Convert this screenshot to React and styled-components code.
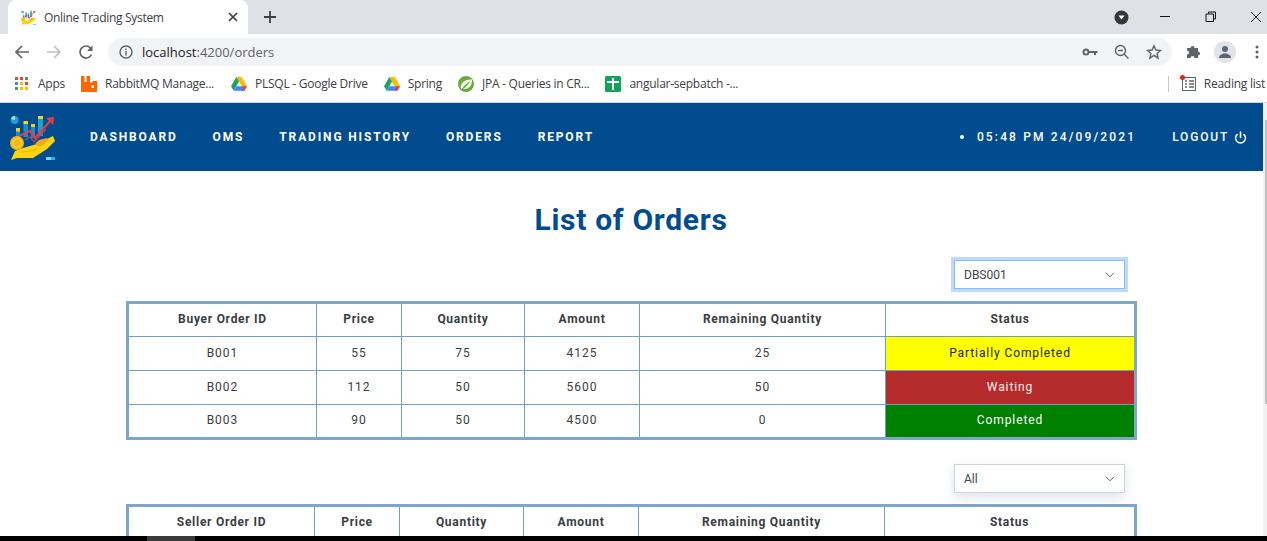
import React from "react";
import styled, { createGlobalStyle } from "styled-components";
import { ChevronDown, Power } from "lucide-react";

const GlobalStyle = createGlobalStyle`
  html, body {
    margin: 0;
    padding: 0;
    height: 100%;
    overflow: hidden;
    background: #ffffff;
  }
  * { box-sizing: border-box; }
`;

const Root = styled.div`
  width: 1267px;
  height: 541px;
  display: flex;
  flex-direction: column;
  overflow: hidden;
  font-family: Roboto, sans-serif;
`;

/* browser chrome */
const TabStrip = styled.div`
  height: 34px;
  flex-shrink: 0;
  display: flex;
  align-items: center;
  background: #dee1e6;
  padding-left: 8px;
`;
const Tab = styled.div`
  width: 240px;
  height: 34px;
  display: flex;
  align-items: center;
  background: #ffffff;
  border-radius: 8px 8px 0 0;
  padding: 0 7px 0 13px;
  gap: 8px;
`;
const TabTitle = styled.span`
  flex: 1;
  font-family: "Open Sans", sans-serif;
  font-size: 12px;
  letter-spacing: -0.3px;
  color: #3c4043;
  white-space: nowrap;
`;
const StripIcon = styled.button`
  border: 0;
  padding: 0;
  background: none;
  display: flex;
  align-items: center;
  justify-content: center;
  width: ${(p) => p.$w || 16}px;
  height: 16px;
  margin-left: ${(p) => p.$ml || 0}px;
`;
const StripSpacer = styled.div`
  flex: 1;
`;
const StripControls = styled.div`
  height: 34px;
  display: flex;
  align-items: center;
`;
const Toolbar = styled.div`
  height: 32px;
  flex-shrink: 0;
  display: flex;
  align-items: flex-end;
  background: #ffffff;
`;
const NavButtons = styled.div`
  width: 108px;
  height: 28px;
  display: flex;
  align-items: center;
  padding-left: 14px;
  gap: 16px;
`;
const Omnibox = styled.div`
  width: 1064px;
  height: 28px;
  display: flex;
  align-items: center;
  background: #f1f3f4;
  border-radius: 14px;
  padding: 0 10px 0 11px;
`;
const Url = styled.span`
  flex: 1;
  margin-left: 9px;
  font-family: "Open Sans", sans-serif;
  font-size: 13px;
  color: #202124;
  span { color: #5f6368; }
`;
const OmniIcons = styled.div`
  display: flex;
  align-items: center;
  gap: 16px;
`;
const ToolRight = styled.div`
  flex: 1;
  height: 28px;
  display: flex;
  align-items: center;
  padding-left: 14px;
  gap: 12px;
`;
const Avatar = styled.div`
  width: 22px;
  height: 22px;
  border-radius: 50%;
  background: #e1e3e8;
  display: flex;
  align-items: center;
  justify-content: center;
`;
const Bookmarks = styled.div`
  height: 37px;
  flex-shrink: 0;
  display: flex;
  align-items: center;
  padding: 0 0 1px 15px;
  background: #ffffff;
  border-bottom: 1px solid #d5d7da;
`;
const Bookmark = styled.div`
  display: flex;
  align-items: center;
  gap: ${(p) => p.$gap || 8}px;
  margin-right: ${(p) => p.$mr}px;
  font-family: "Open Sans", sans-serif;
  font-size: 12px;
  letter-spacing: -0.25px;
  color: #3c4043;
  white-space: nowrap;
`;
const BookmarkDivider = styled.div`
  width: 1px;
  height: 16px;
  background: #c6c8ca;
  margin: 0 11px 0 auto;
`;

/* page */
const Viewport = styled.div`
  flex: 1;
  min-height: 0;
  display: flex;
  overflow: hidden;
`;
const Page = styled.div`
  flex: 1;
  min-width: 0;
  display: flex;
  flex-direction: column;
`;
const ScrollTrack = styled.div`
  width: 4px;
  background: #f1f1f1;
  padding: 17px 0 0 2px;
`;
const ScrollThumb = styled.div`
  height: 284px;
  background: #c1c1c1;
`;
const Navbar = styled.nav`
  height: 68px;
  flex-shrink: 0;
  display: flex;
  align-items: center;
  background: #004c8f;
  padding: 0 16px 0 10px;
  color: #ffffff;
`;
const NavLinks = styled.div`
  display: flex;
  align-items: center;
  gap: 35px;
  margin-left: 34px;
  flex: 1;
`;
const NavLink = styled.a`
  font-size: 12px;
  font-weight: 700;
  letter-spacing: 1.85px;
  white-space: nowrap;
`;
const Clock = styled.div`
  display: flex;
  align-items: center;
  font-size: 12px;
  font-weight: 500;
  letter-spacing: 2.15px;
  white-space: nowrap;
  margin-right: 36px;
`;
const Dot = styled.i`
  width: 4px;
  height: 4px;
  border-radius: 50%;
  background: #ffffff;
  margin-right: 13px;
`;
const Logout = styled.a`
  display: flex;
  align-items: center;
  gap: 5px;
  font-size: 12px;
  font-weight: 500;
  letter-spacing: 1.8px;
`;
const Content = styled.main`
  flex: 1;
  min-height: 0;
  overflow: hidden;
  padding: 29px 130px 0 126px;
  display: flex;
  flex-direction: column;
`;
const Title = styled.h1`
  margin: 0 0 20px;
  padding-left: 3px;
  font-size: 30px;
  line-height: 40px;
  font-weight: 700;
  color: #004c8f;
  text-align: center;
  letter-spacing: 0.7px;
`;
const SelectRow = styled.div`
  display: flex;
  justify-content: flex-end;
  padding-right: 8px;
  margin-bottom: ${(p) => p.$mb}px;
`;
const FakeSelect = styled.div`
  width: 171px;
  height: 29px;
  display: flex;
  align-items: center;
  justify-content: space-between;
  padding: 0 7px 0 9px;
  background: #ffffff;
  border: 1px solid ${(p) => (p.$focus ? "#80bdff" : "#ced4da")};
  box-shadow: ${(p) =>
    p.$focus ? "0 0 0 3px #c0dbf7" : "0 5px 12px rgba(60, 90, 130, 0.16)"};
  font-size: 12px;
  color: #404448;
`;
const Table = styled.table`
  width: 1011px;
  flex-shrink: 0;
  table-layout: fixed;
  border-collapse: collapse;
  border: 3px solid #7ea6c9;
  margin-bottom: ${(p) => p.$mb || 0}px;
  color: #3a3d40;
  font-size: 12px;
  letter-spacing: 1px;
`;
const Th = styled.th`
  height: 34px;
  padding: 0 0 2px;
  border: 1px solid #6e9fcb;
  font-weight: 700;
  letter-spacing: 0.72px;
  text-align: center;
`;
const Td = styled.td`
  height: 34px;
  padding: 0 0 2px;
  border: 1px solid #6e9fcb;
  text-align: center;
`;
const StatusCell = styled(Td)`
  background: ${(p) => p.$bg};
  color: ${(p) => p.$fg};
  letter-spacing: 0.9px;
`;
const BottomBar = styled.div`
  height: 5px;
  flex-shrink: 0;
  background: #000000;
  padding-left: 147px;
`;
const BottomThumb = styled.div`
  width: 48px;
  height: 100%;
  background: #3a3a3a;
`;

const HEADS = ["Price", "Quantity", "Amount", "Remaining Quantity", "Status"];
const BUYER_COLS = [189, 85, 123, 115, 246, 250];
const SELLER_COLS = [187, 85, 124, 115, 246, 251];
const STATUS = {
  "Partially Completed": ["#ffff00", "#222222"],
  Waiting: ["#b52b2b", "#f4f4f4"],
  Completed: ["#008000", "#ffffff"],
};
const ORDERS = [
  ["B001", 55, 75, 4125, 25, "Partially Completed"],
  ["B002", 112, 50, 5600, 50, "Waiting"],
  ["B003", 90, 50, 4500, 0, "Completed"],
];
const BOOKMARKS = [
  ["rabbit", "RabbitMQ Manage...", 17],
  ["drive", "PLSQL - Google Drive", 16],
  ["drive", "Spring", 16],
  ["spring", "JPA - Queries in CR...", 16],
  ["sheet", "angular-sepbatch -...", 0],
];

function OrderTable({ first, cols, rows, mb }) {
  return (
    <Table $mb={mb}>
      <colgroup>
        {cols.map((w, i) => (
          <col key={i} style={{ width: w }} />
        ))}
      </colgroup>
      <thead>
        <tr>
          {[first, ...HEADS].map((h) => (
            <Th key={h}>{h}</Th>
          ))}
        </tr>
      </thead>
      <tbody>
        {rows.map((r) => (
          <tr key={r[0]}>
            {r.slice(0, 5).map((v, i) => (
              <Td key={i}>{v}</Td>
            ))}
            <StatusCell $bg={STATUS[r[5]][0]} $fg={STATUS[r[5]][1]}>
              {r[5]}
            </StatusCell>
          </tr>
        ))}
      </tbody>
    </Table>
  );
}

function AppLogo({ size = 46 }) {
  return (
    <svg width={size} height={size} viewBox="0 0 46 46">
      <circle cx="4.700" cy="6" r="4" fill="#1f9fd4" />
      <path d="M1 5a4 4 0 0 1 4-3v4z" fill="#a5e3c9" />
      <rect x="6" y="14" width="4" height="11" fill="#1d8fc7" />
      <rect x="6" y="14" width="4" height="3.500" fill="#f7d21e" />
      <rect x="13.500" y="7" width="4.500" height="16" fill="#1d8fc7" />
      <rect x="13.500" y="7" width="4.500" height="3" fill="#f7d21e" />
      <rect x="21" y="10" width="4" height="14" fill="#1d8fc7" />
      <rect x="21" y="10" width="4" height="3" fill="#f7d21e" />
      <rect x="28" y="2" width="5" height="20" fill="#1ba0cf" />
      <rect x="28" y="2" width="5" height="3" fill="#f7d21e" />
      <path d="M9 22l11-5 5 7L41 6" fill="none" stroke="#e23d45" strokeWidth="2.200" />
      <path d="M36 4l8-1-1 8z" fill="#e23d45" />
      <path d="M15 26l5-3 4 5 12-13" fill="none" stroke="#b04b63" strokeWidth="1.200" />
      <path
        d="M1 46l4-9 8-3 14-4 6-3 10-5 2 5-8 8-14 9H7z"
        fill="#fdd50f"
      />
      <path d="M25 30l4-4 8-2 1 2-5 5-3 2z" fill="#f2a91a" />
      <path d="M12 38l8-1c3 0 5-1 7-3" fill="none" stroke="#eeb00f" strokeWidth="1.200" />
      <circle cx="7" cy="29" r="7" fill="#f2b90f" />
      <circle cx="7" cy="29" r="4.200" fill="none" stroke="#ffdf5a" strokeWidth="1" />
      <rect x="36" y="43" width="5" height="3" fill="#7fd7ee" />
      <rect x="41" y="43" width="4" height="3" fill="#2fb3dc" />
    </svg>
  );
}

function BookmarkIcon({ kind }) {
  if (kind === "rabbit") {
    return (
      <svg width="16" height="16" viewBox="0 0 16 16">
        <path d="M0 0h3.500v6h2V0H9v6.500h2.500V5H16v11H0z" fill="#f60" />
        <rect x="10.500" y="9.500" width="2.500" height="2.500" fill="#fff" />
      </svg>
    );
  }
  if (kind === "drive") {
    return (
      <svg width="16" height="16" viewBox="0 0 16 14">
        <path d="M5.300 0h5.400L16 9.200h-5.400z" fill="#fbbc04" />
        <path d="M5.300 0L0 9.200l2.700 4.600L8 4.600z" fill="#1fa463" />
        <path d="M5.400 9.200H16l-2.700 4.600H2.700z" fill="#4285f4" />
        <path d="M13.300 13.800L16 9.200h-3.600l-1.600 4.600z" fill="#ea4335" />
      </svg>
    );
  }
  if (kind === "spring") {
    return (
      <svg width="16" height="16" viewBox="0 0 16 16">
        <circle cx="8" cy="8" r="8" fill="#6aa93a" />
        <path d="M3 13C1.500 8 6 3 14 3.500c.5 5-2.500 9.500-7.500 9.500-1.500 0-2.500-.2-3.500 0z" fill="#f2f7ec" />
        <path d="M4 13C6 9.500 8.500 7.500 12 5.500 10 9 8 11 5 13z" fill="#6aa93a" />
      </svg>
    );
  }
  if (kind === "sheet") {
    return (
      <svg width="16" height="16" viewBox="0 0 16 16">
        <rect width="16" height="16" rx="1.500" fill="#12a35a" />
        <path d="M7 2h2v3h5v2H9v7H7V7H2V5h5z" fill="#fff" />
      </svg>
    );
  }
  return null;
}

function AppsIcon() {
  const colors = ["#ea4335", "#ea4335", "#34a853", "#4285f4", "#fbbc04", "#ea4335", "#34a853", "#fbbc04", "#fbbc04"];
  return (
    <svg width="13" height="13" viewBox="0 0 13 13">
      {colors.map((c, i) => (
        <rect key={i} x={(i % 3) * 5} y={Math.floor(i / 3) * 5} width="3" height="3" fill={c} />
      ))}
    </svg>
  );
}

const ReadingIcon = () => (
  <svg width="17" height="17" viewBox="0 0 17 17">
    <rect x="2.500" y="2.500" width="13" height="13" fill="none" stroke="#5f6368" />
    <path d="M5 6h2M9 6h5M5 9h2M9 9h5M5 12h2M9 12h5" stroke="#5f6368" strokeWidth="1.500" />
    <circle cx="2.500" cy="2.500" r="2.500" fill="#e0201b" />
  </svg>
);

export default function App() {
  return (
    <Root>
      <GlobalStyle />
      <TabStrip>
        <Tab>
          <AppLogo size={15} />
          <TabTitle>Online Trading System</TabTitle>
          <svg width="16" height="16" viewBox="0 0 16 16">
            <path d="M4 4l8 8M12 4l-8 8" stroke="#3c4043" strokeWidth="1.700" />
          </svg>
        </Tab>
        <StripIcon $ml={14}>
          <svg width="14" height="14" viewBox="0 0 14 14">
            <path d="M7 1v12M1 7h12" stroke="#3c4043" strokeWidth="1.800" />
          </svg>
        </StripIcon>
        <StripSpacer />
        <StripControls>
          <StripIcon>
            <svg width="15" height="15" viewBox="0 0 15 15">
              <circle cx="7.500" cy="7.500" r="7" fill="#36383a" />
              <path d="M4.500 5.500h6l-3 4z" fill="#fff" />
            </svg>
          </StripIcon>
          <StripIcon $ml={28}>
            <svg width="12" height="12" viewBox="0 0 12 12">
              <path d="M1 5.500h10" stroke="#111" />
            </svg>
          </StripIcon>
          <StripIcon $ml={30}>
            <svg width="12" height="12" viewBox="0 0 12 12">
              <path d="M3.500 2.500V1h7v7H9M1 3h7.500v7.500H1z" fill="none" stroke="#111" />
            </svg>
          </StripIcon>
          <StripIcon $ml={26} $w={22}>
            <svg width="12" height="12" viewBox="0 0 12 12">
              <path d="M1 1l10 10M11 1L1 11" stroke="#222" />
            </svg>
          </StripIcon>
        </StripControls>
      </TabStrip>

      <Toolbar>
        <NavButtons>
          <svg width="16" height="16" viewBox="0 0 16 16">
            <path d="M15 8H2M8 2L2 8l6 6" fill="none" stroke="#5f6368" strokeWidth="1.700" />
          </svg>
          <svg width="16" height="16" viewBox="0 0 16 16">
            <path d="M1 8h13M8 2l6 6-6 6" fill="none" stroke="#bcbec1" strokeWidth="1.700" />
          </svg>
          <svg width="16" height="16" viewBox="0 0 16 16">
            <path d="M13.500 10.500A6 6 0 1 1 12.500 4" fill="none" stroke="#5f6368" strokeWidth="1.700" />
            <path d="M14.500 1.500v5.500H9z" fill="#5f6368" />
          </svg>
        </NavButtons>
        <Omnibox>
          <svg width="14" height="14" viewBox="0 0 14 14">
            <circle cx="7" cy="7" r="6" fill="none" stroke="#5f6368" strokeWidth="1.400" />
            <path d="M7 6v4.500M7 3.500v1.500" stroke="#5f6368" strokeWidth="1.400" />
          </svg>
          <Url>
            localhost<span>:4200/orders</span>
          </Url>
          <OmniIcons>
            <svg width="16" height="16" viewBox="0 0 16 16">
              <circle cx="4" cy="8" r="2.500" fill="none" stroke="#5f6368" strokeWidth="2" />
              <path d="M6 7h9.500v2H14v2h-2V9H6z" fill="#5f6368" />
            </svg>
            <svg width="16" height="16" viewBox="0 0 16 16">
              <circle cx="6.500" cy="6.500" r="5" fill="none" stroke="#5f6368" strokeWidth="1.400" />
              <path d="M4 6.500h5M10 10l4.500 4.500" stroke="#5f6368" strokeWidth="1.400" />
            </svg>
            <svg width="16" height="16" viewBox="0 0 16 16">
              <path d="M8 1.800l1.900 4.200 4.600.5-3.400 3.100 1 4.500L8 11.300l-4.100 2.800 1-4.500L1.500 6.500 6.100 6z" fill="none" stroke="#5f6368" strokeWidth="1.400" />
            </svg>
          </OmniIcons>
        </Omnibox>
        <ToolRight>
          <svg width="16" height="16" viewBox="0 0 16 16">
            <path d="M1 5h3.500a2 2 0 1 1 4 0H12v3.500a2 2 0 1 1 0 4V15H8.500a2 2 0 1 0-4 0H1v-3.500a2 2 0 1 0 0-4z" fill="#5f6368" transform="translate(0 -1)" />
          </svg>
          <Avatar>
            <svg width="14" height="14" viewBox="0 0 14 14">
              <circle cx="7" cy="4" r="3" fill="#5b6579" />
              <path d="M1 13c0-3 3-4.500 6-4.500s6 1.500 6 4.500z" fill="#5b6579" />
            </svg>
          </Avatar>
          <svg width="14" height="16" viewBox="0 0 14 16">
            <circle cx="9" cy="3" r="1.500" fill="#5f6368" />
            <circle cx="9" cy="8" r="1.500" fill="#5f6368" />
            <circle cx="9" cy="13" r="1.500" fill="#5f6368" />
          </svg>
        </ToolRight>
      </Toolbar>

      <Bookmarks>
        <Bookmark $mr={16} $gap={10}>
          <AppsIcon />
          Apps
        </Bookmark>
        {BOOKMARKS.map(([kind, label, mr]) => (
          <Bookmark key={label} $mr={mr}>
            <BookmarkIcon kind={kind} />
            {label}
          </Bookmark>
        ))}
        <BookmarkDivider />
        <Bookmark $mr={2} $gap={7}>
          <ReadingIcon />
          Reading list
        </Bookmark>
      </Bookmarks>

      <Viewport>
        <Page>
          <Navbar>
            <AppLogo />
            <NavLinks>
              <NavLink>DASHBOARD</NavLink>
              <NavLink>OMS</NavLink>
              <NavLink>TRADING HISTORY</NavLink>
              <NavLink>ORDERS</NavLink>
              <NavLink>REPORT</NavLink>
            </NavLinks>
            <Clock>
              <Dot />
              05:48 PM 24/09/2021
            </Clock>
            <Logout>
              LOGOUT
              <Power size={13} strokeWidth={3} />
            </Logout>
          </Navbar>
          <Content>
            <Title>List of Orders</Title>
            <SelectRow $mb={12}>
              <FakeSelect $focus>
                DBS001
                <ChevronDown size={14} color="#444" strokeWidth={1.5} />
              </FakeSelect>
            </SelectRow>
            <OrderTable first="Buyer Order ID" cols={BUYER_COLS} rows={ORDERS} mb={24} />
            <SelectRow $mb={11}>
              <FakeSelect>
                All
                <ChevronDown size={14} color="#444" strokeWidth={1.5} />
              </FakeSelect>
            </SelectRow>
            <OrderTable first="Seller Order ID" cols={SELLER_COLS} rows={[]} />
          </Content>
        </Page>
        <ScrollTrack>
          <ScrollThumb />
        </ScrollTrack>
      </Viewport>
      <BottomBar>
        <BottomThumb />
      </BottomBar>
    </Root>
  );
}
